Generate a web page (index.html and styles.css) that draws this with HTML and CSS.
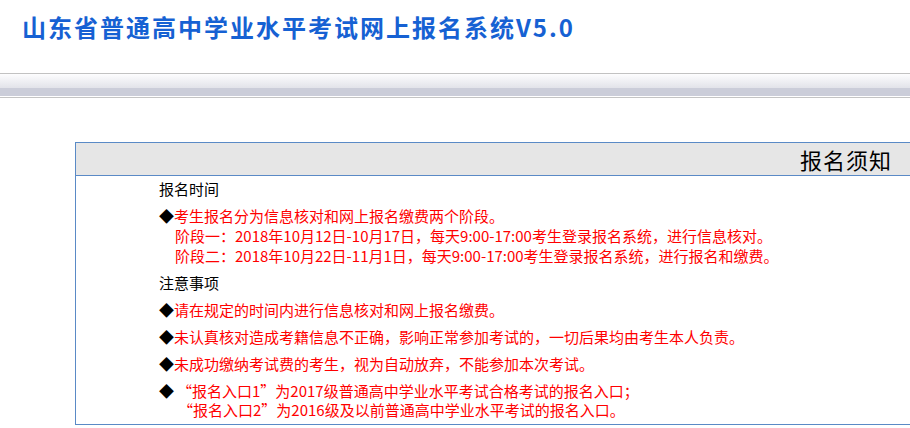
FILE: index.html
```html
<!DOCTYPE html>
<html lang="zh-CN">
<head>
<meta charset="utf-8">
<title>山东省普通高中学业水平考试网上报名系统V5.0</title>
<link rel="stylesheet" href="styles.css">
</head>
<body>
<div class="top">
  <h1 class="site-title">山东省普通高中学业水平考试网上报名系统V5.0</h1>
</div>
<div class="nav-bar"></div>
<div class="notice">
  <div class="notice-head">报名须知</div>
  <div class="notice-body">
    <p class="item">报名时间</p>
    <p class="item red"><span class="dia">◆</span>考生报名分为信息核对和网上报名缴费两个阶段。<br><span class="sub">阶段一：2018年10月12日-10月17日，每天9:00-17:00考生登录报名系统，进行信息核对。</span><br><span class="sub">阶段二：2018年10月22日-11月1日，每天9:00-17:00考生登录报名系统，进行报名和缴费。</span></p>
    <p class="item">注意事项</p>
    <p class="item red"><span class="dia">◆</span>请在规定的时间内进行信息核对和网上报名缴费。</p>
    <p class="item red"><span class="dia">◆</span>未认真核对造成考籍信息不正确，影响正常参加考试的，一切后果均由考生本人负责。</p>
    <p class="item red"><span class="dia">◆</span>未成功缴纳考试费的考生，视为自动放弃，不能参加本次考试。</p>
    <p class="item red tight"><span class="dia">◆</span><span class="q">“报名入口1”为2017级普通高中学业水平考试合格考试的报名入口；</span><br><span class="sub2">“报名入口2”为2016级及以前普通高中学业水平考试的报名入口。</span></p>
  </div>
</div>
</body>
</html>
```
FILE: styles.css
```css
html, body {
  margin: 0;
  padding: 0;
  overflow: hidden;
  background: #fff;
}
body {
  font-family: "Noto Sans CJK SC", "Liberation Sans", sans-serif;
  width: 910px;
}
.top {
  height: 73px;
  padding-left: 22px;
  box-sizing: border-box;
  padding-top: 11px;
}
.site-title {
  margin: 0;
  font-size: 24px;
  line-height: 32px;
  font-weight: bold;
  color: #1661d3;
  letter-spacing: 2px;
  white-space: nowrap;
}
.nav-bar {
  height: 23px;
  border-top: 1px solid #c2c2c2;
  border-bottom: 1px solid #c4c4c4;
  background: linear-gradient(to bottom, #fdfdfe 0px, #e2e3e9 14px, #cbcdd9 14px, #cbcdd9 22px, #ffffff 22px, #ffffff 23px);
}
.notice {
  margin: 44px 0 0 75px;
  width: 836px;
  border: 1px solid #5a8ac6;
}
.notice-head {
  height: 32px;
  line-height: 32px;
  background: #e6e6e6;
  border-bottom: 1px solid #5a8ac6;
  text-align: right;
  padding-right: 20px;
  font-size: 22px;
  color: #000;
  letter-spacing: 1px;
}
.notice-body {
  padding: 3px 0 5px 83px;
  font-size: 15px;
  line-height: 20px;
  color: #000;
}
.item {
  margin: 0 0 7px 0;
  white-space: nowrap;
}
.item:last-child {
  margin-bottom: 0;
}
.red {
  color: #ff0000;
}
.dia {
  color: #000;
}
.sub {
  padding-left: 16px;
}
.q {
  margin-left: 3px;
}
.sub2 {
  padding-left: 19px;
}
.tight {
  line-height: 19px;
  margin-top: 1px;
}
```
